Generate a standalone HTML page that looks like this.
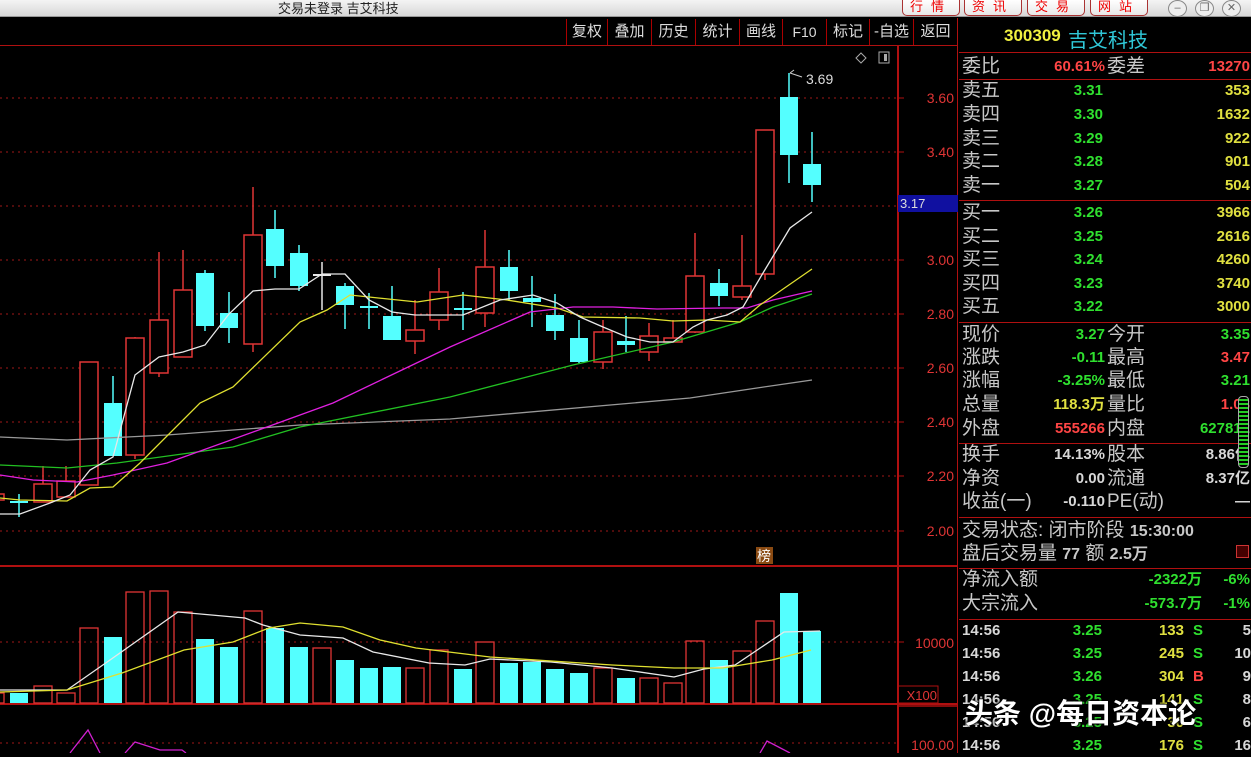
<!DOCTYPE html>
<html><head><meta charset="utf-8"><style>
*{margin:0;padding:0;box-sizing:border-box}
body{width:1251px;height:753px;background:#000;position:relative;overflow:hidden;font-family:"Liberation Sans","Noto Sans CJK SC",sans-serif}
.t{position:absolute;white-space:nowrap}
#title{position:absolute;left:0;top:0;width:1251px;height:17px;background:linear-gradient(#f4f4f4,#d8d8d8);border-bottom:1px solid #999}
.btn{position:absolute;top:0;height:16px;border:1px solid #a33;border-top:none;border-radius:0 0 5px 5px;background:linear-gradient(#fff,#e8e8e8);color:#e00;font-size:13px;line-height:14px;text-align:center;letter-spacing:8px;font-family:"Liberation Sans","Noto Sans CJK SC",sans-serif}
.circ{position:absolute;top:0;width:19px;height:17px;border:1px solid #888;border-radius:50%;background:#eee;color:#666;font-size:11px;text-align:center;line-height:14px}
.tb{position:absolute;top:19px;height:26px;border-left:1px solid #a00;color:#ddd;font-size:15px;line-height:26px;text-align:center}
.rr{height:22px;line-height:22px}
.lab{color:#c8c8c8;font-size:19px;font-family:"Liberation Sans","Noto Sans CJK SC",sans-serif}
.n{font-weight:bold;font-size:15px;text-align:right}
.g{color:#2fe02f}.y{color:#e0e040}.r{color:#ff4545}.w{color:#d8d8d8}
.hl{position:absolute;left:959px;width:292px;height:1px;background:#b01010}
</style></head><body>
<div id="title"><span class="t" style="left:278px;top:-2px;font-size:13px;color:#222">交易未登录 吉艾科技</span></div>
<div class="btn" style="left:902px;width:58px">行情</div>
<div class="btn" style="left:964px;width:58px">资讯</div>
<div class="btn" style="left:1027px;width:58px">交易</div>
<div class="btn" style="left:1090px;width:58px">网站</div>
<div class="circ" style="left:1168px">–</div>
<div class="circ" style="left:1195px">❐</div>
<div class="circ" style="left:1222px">✕</div>
<div style="position:absolute;left:0;top:45px;width:958px;height:1px;background:#b01010"></div>
<div class="tb" style="left:566px;width:41px">复权</div>
<div class="tb" style="left:607px;width:44px">叠加</div>
<div class="tb" style="left:651px;width:44px">历史</div>
<div class="tb" style="left:695px;width:44px">统计</div>
<div class="tb" style="left:739px;width:43px">画线</div>
<div class="tb" style="left:782px;width:44px;font-size:14px">F10</div>
<div class="tb" style="left:826px;width:43px">标记</div>
<div class="tb" style="left:869px;width:44px">-自选</div>
<div class="tb" style="left:913px;width:45px;border-right:1px solid #a00">返回</div>

<svg id="ch" width="958" height="753" style="position:absolute;left:0;top:0">
<g stroke="#a01818" stroke-dasharray="2,4" stroke-width="1">
<line x1="0" x2="896" y1="98" y2="98"/><line x1="0" x2="896" y1="152" y2="152"/><line x1="0" x2="896" y1="206" y2="206"/><line x1="0" x2="896" y1="260" y2="260"/><line x1="0" x2="896" y1="314" y2="314"/><line x1="0" x2="896" y1="368" y2="368"/><line x1="0" x2="896" y1="422" y2="422"/><line x1="0" x2="896" y1="476" y2="476"/><line x1="0" x2="896" y1="531" y2="531"/><line x1="0" x2="896" y1="642" y2="642"/><line x1="0" x2="896" y1="743" y2="743"/>
</g>
<g stroke="#b01010" stroke-width="2" fill="none">
<line x1="898" y1="46" x2="898" y2="753"/><line x1="0" y1="566" x2="958" y2="566"/><line x1="0" y1="704" x2="958" y2="704"/>
<rect x="898" y="706" width="61" height="50" stroke-width="1.5"/>
<rect x="898" y="686" width="40" height="17" stroke-width="1"/>
</g>
<line x1="958" y1="18" x2="958" y2="753" stroke="#b01010" stroke-width="2"/>
<g stroke="#b01010"><line x1="898" x2="904" y1="98" y2="98"/><line x1="898" x2="904" y1="152" y2="152"/><line x1="898" x2="904" y1="260" y2="260"/><line x1="898" x2="904" y1="314" y2="314"/><line x1="898" x2="904" y1="368" y2="368"/><line x1="898" x2="904" y1="422" y2="422"/><line x1="898" x2="904" y1="476" y2="476"/><line x1="898" x2="904" y1="531" y2="531"/><line x1="898" x2="904" y1="642" y2="642"/></g>
<g fill="#e03535" font-size="14" text-anchor="end" font-family="Liberation Sans">
<text x="954" y="103">3.60</text><text x="954" y="157">3.40</text><text x="954" y="265">3.00</text><text x="954" y="319">2.80</text><text x="954" y="373">2.60</text><text x="954" y="427">2.40</text><text x="954" y="481">2.20</text><text x="954" y="536">2.00</text><text x="954" y="648">10000</text><text x="954" y="750">100.00</text>
<text x="937" y="700" text-anchor="end" font-size="13">X100</text>
</g>
<rect x="898" y="195" width="60" height="17" fill="#1010a0"/>
<text x="900" y="208" fill="#ddd" font-size="13" font-family="Liberation Sans">3.17</text>
<rect x="756" y="547" width="17" height="17" fill="#8a4a12"/>
<text x="757" y="561" fill="#fff" font-size="14" font-family="Noto Sans CJK SC">榜</text>
<path d="M856 58l5-5 5 5-5 5z" fill="none" stroke="#aaa"/>
<rect x="879" y="52" width="10" height="11" fill="none" stroke="#aaa"/><rect x="884" y="54" width="3" height="7" fill="#aaa"/>
<path d="M790 73l4-3M790 73l12 4" stroke="#ccc" fill="none"/>
<text x="806" y="84" fill="#ddd" font-size="14" font-family="Liberation Sans">3.69</text>
<g id="cand"></g>
<g fill="none" stroke-width="1.3">
<polyline stroke="#999" points="0,437 67,440 167,435 300,425 450,419 690,398 757,388 812,380"/>
<polyline stroke="#22c022" points="0,465 67,468 117,463 233,447 300,427 450,397 573,365 673,342 740,322 773,307 812,294"/>
<polyline stroke="#e020e0" points="0,475 33,480 77,482 113,475 167,463 267,427 333,403 450,347 530,312 573,307 613,307 657,309 723,308 747,308 773,300 812,291"/>
<polyline stroke="#e0e030" points="0,498 20,500 67,501 90,488 113,487 140,463 200,403 233,387 300,322 327,310 350,295 417,302 463,295 507,300 557,308 583,317 640,318 673,321 707,320 740,322 760,305 812,269"/>
<polyline stroke="#e8e8e8" points="0,514 20,514 50,503 70,495 90,470 113,457 135,375 159,357 183,352 205,345 229,314 253,291 275,289 299,289 322,274 345,274 369,300 392,312 415,315 440,315 463,315 500,300 533,295 557,303 580,317 603,327 627,337 650,342 673,342 693,327 707,320 727,315 743,307 763,273 790,228 812,212"/>
<polyline stroke="#e8e8e8" points="0,690 67,690 110,660 178,612 245,618 263,625 300,635 343,638 373,652 429,663 465,665 490,659 551,662 612,668 674,677 704,669 735,665 784,632 820,631"/>
<polyline stroke="#e0e030" points="0,692 67,690 122,673 184,650 233,642 269,628 300,623 343,627 380,640 416,648 490,657 612,665 674,668 723,668 772,660 811,650"/>
<g stroke="#d020d0"><polyline points="70,753 88,730 100,753"/><polyline points="125,753 135,742 160,750 182,750 186,753"/><polyline points="760,753 767,741 790,753"/></g>
</g>
</svg>

<div class="hl" style="top:52px"></div><div class="hl" style="top:79px"></div><div class="hl" style="top:200px"></div><div class="hl" style="top:322px"></div><div class="hl" style="top:443px"></div><div class="hl" style="top:517px"></div><div class="hl" style="top:568px"></div><div class="hl" style="top:619px"></div>
<div class="t" style="left:1004px;top:26px;font-size:17px;font-weight:bold;color:#f0f040">300309</div>
<div class="t" style="left:1068px;top:24px;font-size:20px;color:#30c8d8">吉艾科技</div>
<div id="rp"></div>
<div class="t" style="left:1238px;top:396px;width:11px;height:72px;border:1px solid #aaa;border-radius:4px;background:repeating-linear-gradient(#000 0 2px,#2c2 2px 4px)"></div>
<div class="t" style="left:1236px;top:545px;width:13px;height:13px;border:1px solid #c33;background:#400"></div>
<div class="t" style="left:965px;top:692px;font-size:28px;font-weight:bold;color:#fff;text-shadow:1px 1px 2px #000,-1px -1px 2px #000">头条 @每日资本论</div>

<script>
var C=[[-5,494,500,494,500,'r'],[19,501,503,494,517,'c'],[43,484,502,466,502,'r'],[66,481,497,466,497,'r'],[89,362,485,362,485,'r'],[113,403,456,376,456,'c'],[135,338,455,337,459,'r'],[159,320,373,252,377,'r'],[183,290,357,250,357,'r'],[205,273,326,270,331,'c'],[229,313,328,292,343,'c'],[253,235,344,187,352,'r'],[275,229,266,210,278,'c'],[299,253,286,245,291,'c'],[322,274,276,262,310,'w'],[345,286,305,283,329,'c'],[369,306,308,293,329,'c'],[392,316,340,286,340,'c'],[415,330,341,300,354,'r'],[439,292,320,268,330,'r'],[463,308,310,292,330,'c'],[485,267,313,230,327,'r'],[509,267,291,250,301,'c'],[532,298,302,276,327,'c'],[555,315,331,294,340,'c'],[579,338,362,320,363,'c'],[603,332,362,320,369,'r'],[626,341,345,316,352,'c'],[649,336,352,323,361,'r'],[673,338,342,320,342,'r'],[695,276,332,233,333,'r'],[719,283,296,269,306,'c'],[742,286,297,235,300,'r'],[765,130,274,130,280,'r'],[789,97,155,73,183,'c'],[812,164,185,132,202,'c']];
var V=[[693,'r'],[693,'c'],[686,'r'],[693,'r'],[628,'r'],[637,'c'],[592,'r'],[591,'r'],[612,'r'],[639,'c'],[647,'c'],[611,'r'],[628,'c'],[647,'c'],[648,'r'],[660,'c'],[668,'c'],[667,'c'],[668,'r'],[650,'r'],[669,'c'],[642,'r'],[663,'c'],[662,'c'],[669,'c'],[673,'c'],[668,'r'],[678,'c'],[678,'r'],[683,'r'],[641,'r'],[660,'c'],[651,'r'],[621,'r'],[593,'c'],[631,'c']];
var s='';
C.forEach(function(c,i){var x=c[0],col=c[5]=='r'?'#e03535':c[5]=='c'?'#54ffff':'#e8e8e8';
s+='<line x1="'+x+'" x2="'+x+'" y1="'+c[3]+'" y2="'+c[4]+'" stroke="'+col+'" stroke-width="1.5"/>';
var h=Math.max(c[2]-c[1],1.5);
if(c[5]=='r')s+='<rect x="'+(x-9)+'" y="'+c[1]+'" width="18" height="'+h+'" fill="#000" stroke="'+col+'" stroke-width="1.5"/>';
else s+='<rect x="'+(x-9)+'" y="'+c[1]+'" width="18" height="'+h+'" fill="'+col+'"/>';
var v=V[i];
if(v[1]=='r')s+='<rect x="'+(x-9)+'" y="'+v[0]+'" width="18" height="'+(703-v[0])+'" fill="none" stroke="#e03535" stroke-width="1.3"/>';
else s+='<rect x="'+(x-9)+'" y="'+v[0]+'" width="18" height="'+(703-v[0])+'" fill="#54ffff"/>';
});
document.getElementById('cand').innerHTML=s;
function T(x,y,t,cls,right){return '<div class="t rr '+cls+'" style="'+(right?'right:'+(1251-x)+'px':'left:'+x+'px')+';top:'+(y-11)+'px">'+t+'</div>';}
var r='';
function row(y,l1,v1,c1,l2,v2,c2){r+=T(962,y,l1,'lab');r+=T(1105,y,v1,'n '+c1,1);if(l2)r+=T(1107,y,l2,'lab');r+=T(1250,y,v2,'n '+c2,1);}
row(67,'委比','60.61%','r','委差','13270','r');
var sp=[['卖五','3.31','353'],['卖四','3.30','1632'],['卖三','3.29','922'],['卖二','3.28','901'],['卖一','3.27','504']];
sp.forEach(function(a,i){var y=91+i*23.8;r+=T(962,y,a[0],'lab');r+=T(1103,y,a[1],'n g',1);r+=T(1250,y,a[2],'n y',1);});
var bp=[['买一','3.26','3966'],['买二','3.25','2616'],['买三','3.24','4260'],['买四','3.23','3740'],['买五','3.22','3000']];
bp.forEach(function(a,i){var y=213+i*23.6;r+=T(962,y,a[0],'lab');r+=T(1103,y,a[1],'n g',1);r+=T(1250,y,a[2],'n y',1);});
row(335,'现价','3.27','g','今开','3.35','g');
row(358,'涨跌','-0.11','g','最高','3.47','r');
row(381,'涨幅','-3.25%','g','最低','3.21','g');
row(405,'总量','118.3万','y','量比','1.03','r');
row(429,'外盘','555266','r','内盘','627812','g');
row(455,'换手','14.13%','w','股本','8.86亿','w');
row(479,'净资','0.00','w','流通','8.37亿','w');
row(502,'收益(一)','-0.110','w','PE(动)','—','w');
r+='<div class="t lab rr" style="left:962px;top:520px">交易状态: 闭市阶段 <b style="font-size:16px;font-family:Liberation Sans">15:30:00</b></div>';
r+='<div class="t lab rr" style="left:962px;top:543px">盘后交易量 <b style="font-size:16px;font-family:Liberation Sans">77</b> 额 <b style="font-size:16px;font-family:Liberation Sans">2.5万</b></div>';
r+=T(962,580,'净流入额','lab');r+=T(1202,580,'-2322万','n g',1);r+=T(1250,580,'-6%','n g',1);
r+=T(962,604,'大宗流入','lab');r+=T(1202,604,'-573.7万','n g',1);r+=T(1250,604,'-1%','n g',1);
var tk=[['3.25','133','S','5'],['3.25','245','S','10'],['3.26','304','B','9'],['3.25','141','S','8'],['3.25','30','S','6'],['3.25','176','S','16']];
tk.forEach(function(a,i){var y=631+i*23;r+=T(962,y,'14:56','n w');r+=T(1102,y,a[0],'n g',1);r+=T(1184,y,a[1],'n y',1);r+=T(1193,y,a[2],'n '+(a[2]=='B'?'r':'g'));r+=T(1251,y,a[3],'n w',1);});
document.getElementById('rp').innerHTML=r;
</script>
</body></html>
